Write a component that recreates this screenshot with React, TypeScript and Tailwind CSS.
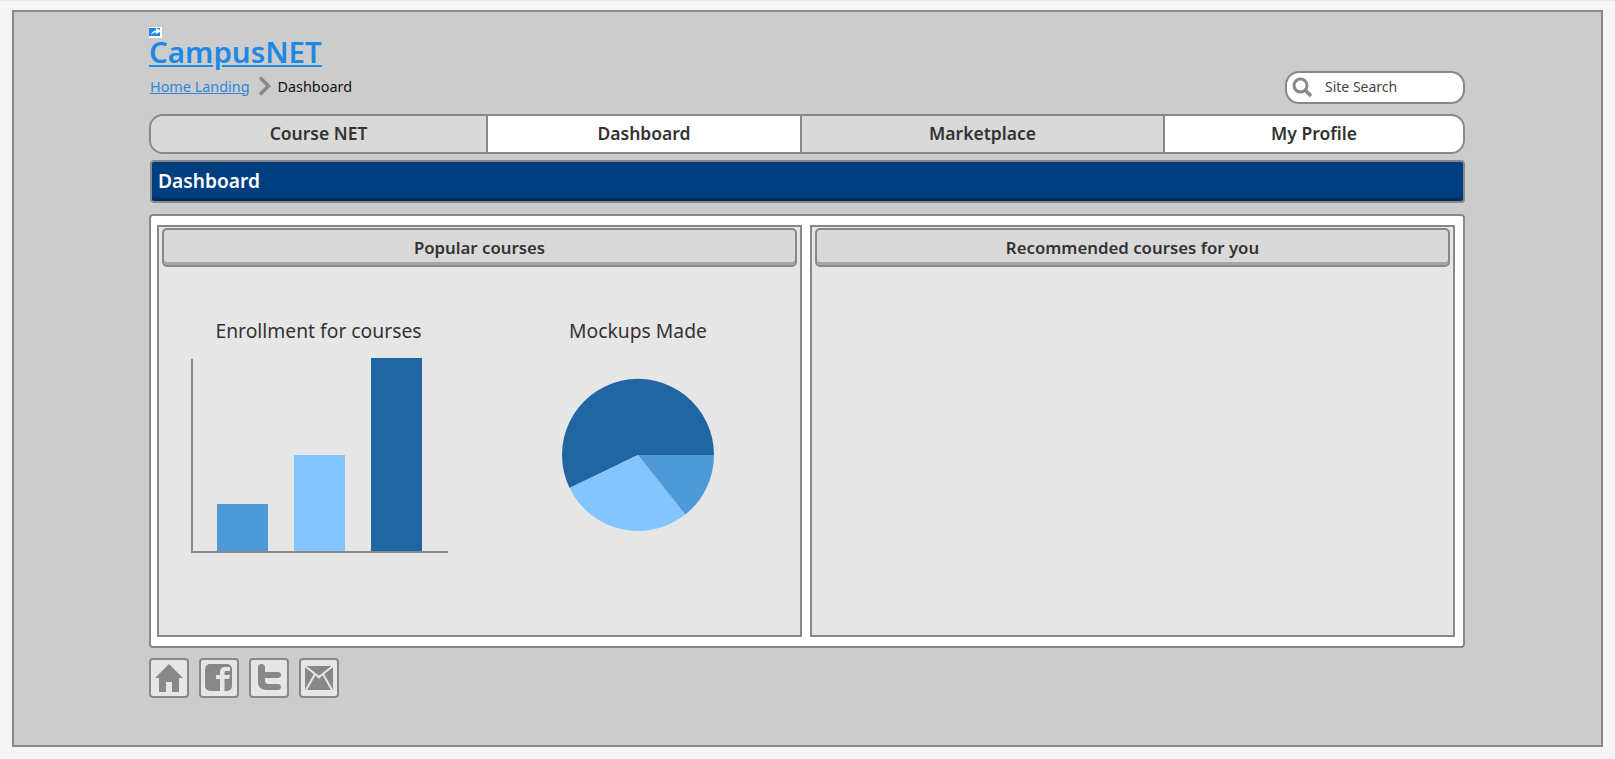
const font = { fontFamily: '"Noto Sans", sans-serif' };

const BrokenImage = () => (
  <svg width="13" height="11" viewBox="0 0 13 11" className="block">
    <rect width="13" height="11" fill="#ffffff" />
    <rect x="0" y="1" width="11" height="8" fill="#1e88e5" />
    <path d="M2 8 C2.500 5 5 3.500 7 3.500 L7 1 L13 4 L7 7 L7 5.500 C5.500 5.500 3.500 6 2 8Z" fill="#ffffff" />
  </svg>
);

const Tab = ({ label, active, className }: { label: string; active?: boolean; className: string }) => (
  <div
    className={`flex items-center justify-center pb-[2px] text-[17.500px] font-semibold text-[#333333] ${
      active ? "bg-white" : "bg-[#d9d9d9]"
    } ${className}`}
  >
    {label}
  </div>
);

const Heading = ({ label }: { label: string }) => (
  <div className="mx-[3px] mt-[1px] flex h-[39px] items-center justify-center rounded-[5px] border-2 border-[#888888] bg-[#d9d9d9] pt-[1px] text-[16.800px] font-semibold text-[#333333] shadow-[inset_0_-3px_0_#a6a6a6]">
    {label}
  </div>
);

const Bars = () => (
  <div className="ml-[32px] flex h-[194px] w-[257px] items-end border-b-2 border-l-2 border-[#888888] pl-[24px]">
    <div className="h-[47px] w-[51px] bg-[#4e9ad9]" />
    <div className="ml-[26px] h-[96px] w-[51px] bg-[#85c5ff]" />
    <div className="ml-[26px] h-[193px] w-[51px] bg-[#1f66a3]" />
  </div>
);

const Pie = () => (
  <svg width="154" height="154" viewBox="0 0 154 154" className="block">
    <path d="M77 77 L8.600 110 A76 76 0 1 1 153 77 Z" fill="#1f66a3" />
    <path d="M77 77 L124.300 136.500 A76 76 0 0 1 8.600 110 Z" fill="#85c5ff" />
    <path d="M77 77 L153 77 A76 76 0 0 1 124.300 136.500 Z" fill="#4e9ad9" />
  </svg>
);

const SocialButton = ({ children }: { children: React.ReactNode }) => (
  <div className="flex h-[40px] w-[40px] items-center justify-center rounded-[4px] border-2 border-[#888888] bg-[#e6e6e6]">
    {children}
  </div>
);

export default function App() {
  return (
    <div className="h-[759px] overflow-hidden border-t border-[#e8e8e8] bg-[#f5f5f5] pl-[12px] pt-[9px]" style={font}>
      <div className="h-[737px] w-[1591px] border-2 border-[#888888] bg-[#cccccc] pl-[135px] pt-[15px]">
        <div className="w-[1316px]">
          <BrokenImage />
          <a className="-mt-[3px] block w-fit text-[29.500px] font-semibold leading-[33px] text-[#1e88e5] underline" href="#">
            CampusNET
          </a>

          <div className="mt-[2px] flex h-[34px] items-center justify-between">
            <div className="-mt-[1px] flex items-center text-[14.400px] text-[#111111]">
              <a className="ml-[1px] text-[#2b88d8] underline" href="#">
                Home Landing
              </a>
              <svg width="14" height="20" viewBox="0 0 14 20" className="mx-[7px]">
                <path d="M3 1.500 L11.500 10 L3 18.500" fill="none" stroke="#888888" strokeWidth="3.500" />
              </svg>
              <span>Dashboard</span>
            </div>
            <div className="flex h-[33px] w-[180px] items-center rounded-[14px] border-2 border-[#888888] bg-white pl-[4px] text-[14px] text-[#444444]">
              <svg width="22" height="22" viewBox="0 0 22 22">
                <circle cx="9.500" cy="9.500" r="6.500" fill="none" stroke="#888888" strokeWidth="3" />
                <path d="M14 14 L20 20" stroke="#888888" strokeWidth="3.500" />
              </svg>
              <span className="mb-[2px] ml-[12px]">Site Search</span>
            </div>
          </div>

          <div className="mt-[10px] flex h-[40px] overflow-hidden rounded-[14px] border-2 border-[#888888]">
            <Tab label="Course NET" className="w-[337px] border-r-2 border-[#888888]" />
            <Tab label="Dashboard" active className="w-[314px] border-r-2 border-[#888888]" />
            <Tab label="Marketplace" className="w-[363px] border-r-2 border-[#888888]" />
            <Tab label="My Profile" active className="flex-1" />
          </div>

          <div className="ml-[1px] mt-[6px] flex h-[43px] w-[1315px] items-center rounded-[4px] border-2 border-[#888888] bg-[#003f7f] pl-[6px] text-[19.200px] font-semibold text-white shadow-[inset_0_-3px_0_#002f60]">
            Dashboard
          </div>

          <div className="mt-[11px] flex h-[434px] gap-[8px] rounded-[4px] border-2 border-[#888888] bg-white px-[6px] py-[9px]">
            <div className="h-[412px] w-[645px] border-2 border-[#888888] bg-[#e6e6e6]">
              <Heading label="Popular courses" />
              <div className="flex pt-[50px]">
                <div className="w-[319px]">
                  <div className="mb-[14px] text-center text-[19.300px] leading-[28px] text-[#333333]">
                    Enrollment for courses
                  </div>
                  <Bars />
                </div>
                <div className="w-[320px]">
                  <div className="text-center text-[19.300px] leading-[28px] text-[#333333]">Mockups Made</div>
                  <div className="ml-[83px] mt-[33px]">
                    <Pie />
                  </div>
                </div>
              </div>
            </div>
            <div className="h-[412px] w-[645px] border-2 border-[#888888] bg-[#e6e6e6]">
              <Heading label="Recommended courses for you" />
            </div>
          </div>

          <div className="mt-[10px] flex gap-[10px]">
            <SocialButton>
              <svg width="30" height="30" viewBox="0 0 30 30">
                <path d="M15 1 L29 15 L25 15 L25 29 L18 29 L18 19 L12 19 L12 29 L5 29 L5 15 L1 15 Z" fill="#888888" />
              </svg>
            </SocialButton>
            <SocialButton>
              <svg width="28" height="28" viewBox="0 0 28 28">
                <rect x="0" y="0" width="27" height="27" rx="5" fill="#888888" />
                <path d="M15 27 V15 H11 V11 H15 V8 C15 5 17 3 20 3 H25 V7 H21 C20 7 19.500 7.500 19.500 8.500 V11 H25 L24 15 H19.500 V27 Z" fill="#e6e6e6" />
              </svg>
            </SocialButton>
            <SocialButton>
              <svg width="30" height="30" viewBox="0 0 30 30">
                <path d="M4 4 C4 0 11 0 11 4 V9 H24 C28 9 28 15 24 15 H11 V18 C11 20 12 21 14 21 H24 C28 21 28 27 24 27 H13 C7 27 4 24 4 19 Z" fill="#888888" />
              </svg>
            </SocialButton>
            <SocialButton>
              <svg width="30" height="26" viewBox="0 0 30 26">
                <rect x="1" y="1" width="28" height="24" fill="#888888" />
                <path d="M1 1 L15 12 L29 1 M2 25 L11 9 M28 25 L19 9" fill="none" stroke="#e6e6e6" strokeWidth="2" />
                <circle cx="15" cy="12" r="1.500" fill="#e6e6e6" />
              </svg>
            </SocialButton>
          </div>
        </div>
      </div>
    </div>
  );
}
